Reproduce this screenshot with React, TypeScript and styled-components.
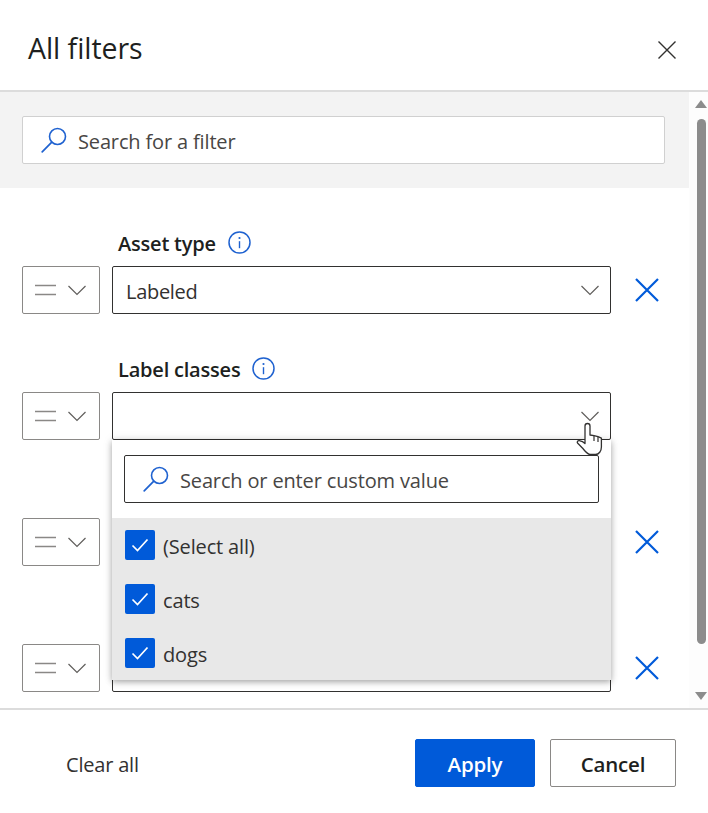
import React from 'react';
import styled, { createGlobalStyle } from 'styled-components';

const GlobalStyle = createGlobalStyle`
  html, body {
    margin: 0;
    padding: 0;
    background: #fff;
  }
  * {
    box-sizing: border-box;
  }
`;

const Panel = styled.div`
  width: 708px;
  height: 813px;
  display: flex;
  flex-direction: column;
  overflow: hidden;
  background: #fff;
  color: #323130;
  font-family: 'Open Sans', 'Noto Sans', sans-serif;
`;

const Header = styled.header`
  height: 92px;
  flex: none;
  display: flex;
  align-items: center;
  justify-content: space-between;
  padding: 0 31px 0 28px;
  border-bottom: 2px solid #dcdcdc;
`;

const Title = styled.h1`
  margin: 5px 0 0;
  font-size: 28.5px;
  font-weight: 400;
  letter-spacing: -0.05px;
  color: #201f1e;
`;

const CloseButton = styled.button`
  width: 20px;
  height: 20px;
  padding: 0;
  margin-top: 10px;
  border: 0;
  background: none;
  display: flex;
`;

const Body = styled.div`
  flex: 1;
  min-height: 0;
  display: flex;
`;

const Content = styled.div`
  flex: 1;
  min-width: 0;
  overflow: hidden;
`;

const SearchBand = styled.div`
  height: 96px;
  padding: 24px 24px 24px 22px;
  background: #f3f3f3;
`;

const SearchBox = styled.div<{ $dark?: boolean }>`
  height: 48px;
  display: flex;
  align-items: center;
  gap: 11px;
  padding-left: 18px;
  background: #fff;
  border: 1px solid ${(p) => (p.$dark ? '#323130' : '#d0d0d0')};
  border-radius: 2px;
  font-size: 20px;
  letter-spacing: -0.15px;
  color: #484644;
`;

/* nudges the text down a little, the fallback font sits higher than the original */
const Value = styled.span`
  padding-top: 2px;
`;

const Rows = styled.div`
  display: flex;
  flex-direction: column;
  gap: 42px;
  padding: 42px 0 0 22px;
`;

const FilterRow = styled.div``;

const LabelLine = styled.div`
  height: 28px;
  margin: 0 0 8px 96px;
  display: flex;
  align-items: center;
  gap: 12px;
`;

const Label = styled.label`
  font-size: 20px;
  font-weight: 600;
  letter-spacing: -0.2px;
  color: #201f1e;
  margin-top: -1px;
`;

const Controls = styled.div`
  display: flex;
  align-items: center;
`;

const Operator = styled.div`
  width: 78px;
  height: 48px;
  flex: none;
  display: flex;
  align-items: center;
  gap: 12px;
  padding-left: 12px;
  margin-right: 12px;
  border: 1px solid #8a8886;
  border-radius: 2px;
`;

const Field = styled.div`
  position: relative;
  width: 499px;
  height: 48px;
  flex: none;
  display: flex;
  align-items: center;
  justify-content: space-between;
  padding: 0 11px 0 13px;
  border: 1px solid #323130;
  border-radius: 2px;
  font-size: 20px;
  letter-spacing: -0.3px;
  background: #fff;
`;

const RemoveButton = styled.button`
  width: 24px;
  height: 24px;
  margin-left: 24px;
  padding: 0;
  border: 0;
  background: none;
  display: flex;
`;

const Popover = styled.div`
  position: absolute;
  z-index: 2;
  top: 47px;
  left: -1px;
  width: 499px;
  background: #fff;
  box-shadow: 0 2px 6px rgba(0, 0, 0, 0.3), 0 0 10px rgba(0, 0, 0, 0.1);
`;

const PopoverSearch = styled.div`
  padding: 15px 12px;
`;

const Options = styled.ul`
  margin: 0;
  padding: 0;
  list-style: none;
  background: #e8e8e8;
`;

const Option = styled.li`
  height: 54px;
  display: flex;
  align-items: center;
  gap: 8px;
  padding-left: 13px;
  font-size: 20px;
  letter-spacing: -0.15px;
  color: #323130;
`;

const Checkbox = styled.span`
  width: 30px;
  height: 30px;
  flex: none;
  display: flex;
  align-items: center;
  justify-content: center;
  background: #005ad9;
  border-radius: 2px;
`;

const Pointer = styled.svg`
  position: absolute;
  z-index: 3;
  right: 6px;
  top: 29px;
`;

const Scrollbar = styled.div`
  width: 19px;
  flex: none;
  display: flex;
  flex-direction: column;
  align-items: center;
  padding: 8px 0 8px 5px;
  background: #fdfdfd;
`;

const Arrow = styled.span<{ $down?: boolean }>`
  width: 0;
  height: 0;
  flex: none;
  border-left: 6px solid transparent;
  border-right: 6px solid transparent;
  ${(p) => (p.$down ? 'border-top: 8px solid #8c8c8c;' : 'border-bottom: 8px solid #8c8c8c;')}
`;

const Thumb = styled.div`
  width: 9px;
  height: 525px;
  margin: 11px 0 auto;
  background: #8c8c8c;
  border-radius: 5px;
`;

const Footer = styled.footer`
  height: 105px;
  flex: none;
  display: flex;
  align-items: flex-start;
  padding: 29px 32px 0 66px;
  border-top: 2px solid #dcdcdc;
`;

const ClearAll = styled.button`
  height: 48px;
  padding: 2px 0 0;
  margin-right: auto;
  border: 0;
  background: none;
  font: inherit;
  font-size: 20px;
  letter-spacing: -0.2px;
  color: #323130;
`;

const ActionButton = styled.button<{ $primary?: boolean }>`
  width: ${(p) => (p.$primary ? '120px' : '126px')};
  height: 48px;
  padding: 2px 0 0;
  margin-left: ${(p) => (p.$primary ? '0' : '15px')};
  border: 1px solid ${(p) => (p.$primary ? '#005ad9' : '#8a8886')};
  border-radius: 2px;
  background: ${(p) => (p.$primary ? '#005ad9' : '#fff')};
  color: ${(p) => (p.$primary ? '#fff' : '#201f1e')};
  font: inherit;
  font-size: 20.5px;
  font-weight: 600;
  letter-spacing: -0.2px;
`;

const Chevron = () => (
  <svg width="18" height="11" viewBox="0 0 18 11" fill="none" style={{ flex: 'none' }}>
    <path d="M.5 1L9 9.500 17.500 1" stroke="#605e5c" strokeWidth="1.200" />
  </svg>
);

const SearchIcon = () => (
  <svg width="26" height="26" viewBox="0 0 26 26" fill="none" style={{ flex: 'none' }}>
    <circle cx="16.5" cy="9.5" r="8" stroke="#1f62d0" strokeWidth="1.6" />
    <path d="M10.8 15.2L1.2 24.8" stroke="#1f62d0" strokeWidth="1.7" strokeLinecap="round" />
  </svg>
);

const InfoIcon = () => (
  <svg width="23" height="23" viewBox="0 0 23 23" fill="none" style={{ marginBottom: 4 }}>
    <circle cx="11.5" cy="11.5" r="10.5" stroke="#1f62d0" strokeWidth="1.5" />
    <circle cx="11.5" cy="7" r="1.1" fill="#1f62d0" />
    <path d="M11.5 10.2v7" stroke="#1f62d0" strokeWidth="1.4" />
  </svg>
);

const OperatorSelect = () => (
  <Operator>
    <svg width="21" height="12" viewBox="0 0 21 12" fill="none" style={{ flex: 'none' }}>
      <path d="M0 1.5h21M0 10.5h21" stroke="#8a8886" strokeWidth="1.6" />
    </svg>
    <Chevron />
  </Operator>
);

const RemoveIcon = () => (
  <RemoveButton aria-label="Remove filter">
    <svg width="24" height="24" viewBox="0 0 24 24" fill="none">
      <path d="M1 1l22 22M23 1L1 23" stroke="#005ad9" strokeWidth="2.2" />
    </svg>
  </RemoveButton>
);

const Check = () => (
  <svg width="18" height="14" viewBox="0 0 18 14" fill="none">
    <path d="M1.5 7.5l5 5L16.5 1.5" stroke="#fff" strokeWidth="1.7" />
  </svg>
);

const options = ['(Select all)', 'cats', 'dogs'];

export default function App() {
  return (
    <>
      <GlobalStyle />
      <Panel>
        <Header>
          <Title>All filters</Title>
          <CloseButton aria-label="Close">
            <svg width="20" height="20" viewBox="0 0 20 20" fill="none">
              <path d="M1.5 1.5l17 17M18.5 1.5l-17 17" stroke="#323130" strokeWidth="1.4" />
            </svg>
          </CloseButton>
        </Header>

        <Body>
          <Content>
            <SearchBand>
              <SearchBox>
                <SearchIcon />
                <Value>Search for a filter</Value>
              </SearchBox>
            </SearchBand>

            <Rows>
              <FilterRow>
                <LabelLine>
                  <Label>Asset type</Label>
                  <InfoIcon />
                </LabelLine>
                <Controls>
                  <OperatorSelect />
                  <Field>
                    <Value>Labeled</Value>
                    <Chevron />
                  </Field>
                  <RemoveIcon />
                </Controls>
              </FilterRow>

              <FilterRow>
                <LabelLine>
                  <Label>Label classes</Label>
                  <InfoIcon />
                </LabelLine>
                <Controls>
                  <OperatorSelect />
                  <Field>
                    <span />
                    <Chevron />
                    <Pointer width="28" height="34" viewBox="0 0 28 34" fill="none">
                      <path
                        d="M9 20V4a2.5 2.5 0 0 1 5 0v9l4 .6 4 1 3.4 1.6V25c0 4-2.400 7.500-6 7.500h-5c-3 0-5-3-8-6.500L1.500 21c-.8-1.300.2-2.500 1.800-2.300 2 .3 4 1 5.700 2.800z"
                        fill="#fff"
                        stroke="#323130"
                        strokeWidth="1.300"
                        strokeLinejoin="round"
                      />
                      <path d="M18 14v5M22 15v5" stroke="#323130" strokeWidth="1.200" />
                    </Pointer>
                    <Popover>
                      <PopoverSearch>
                        <SearchBox $dark>
                          <SearchIcon />
                          <Value>Search or enter custom value</Value>
                        </SearchBox>
                      </PopoverSearch>
                      <Options>
                        {options.map((o) => (
                          <Option key={o}>
                            <Checkbox>
                              <Check />
                            </Checkbox>
                            <Value>{o}</Value>
                          </Option>
                        ))}
                      </Options>
                    </Popover>
                  </Field>
                </Controls>
              </FilterRow>

              <FilterRow>
                <LabelLine />
                <Controls>
                  <OperatorSelect />
                  <Field />
                  <RemoveIcon />
                </Controls>
              </FilterRow>

              <FilterRow>
                <LabelLine />
                <Controls>
                  <OperatorSelect />
                  <Field />
                  <RemoveIcon />
                </Controls>
              </FilterRow>
            </Rows>
          </Content>

          <Scrollbar>
            <Arrow />
            <Thumb />
            <Arrow $down />
          </Scrollbar>
        </Body>

        <Footer>
          <ClearAll>Clear all</ClearAll>
          <ActionButton $primary>Apply</ActionButton>
          <ActionButton>Cancel</ActionButton>
        </Footer>
      </Panel>
    </>
  );
}
